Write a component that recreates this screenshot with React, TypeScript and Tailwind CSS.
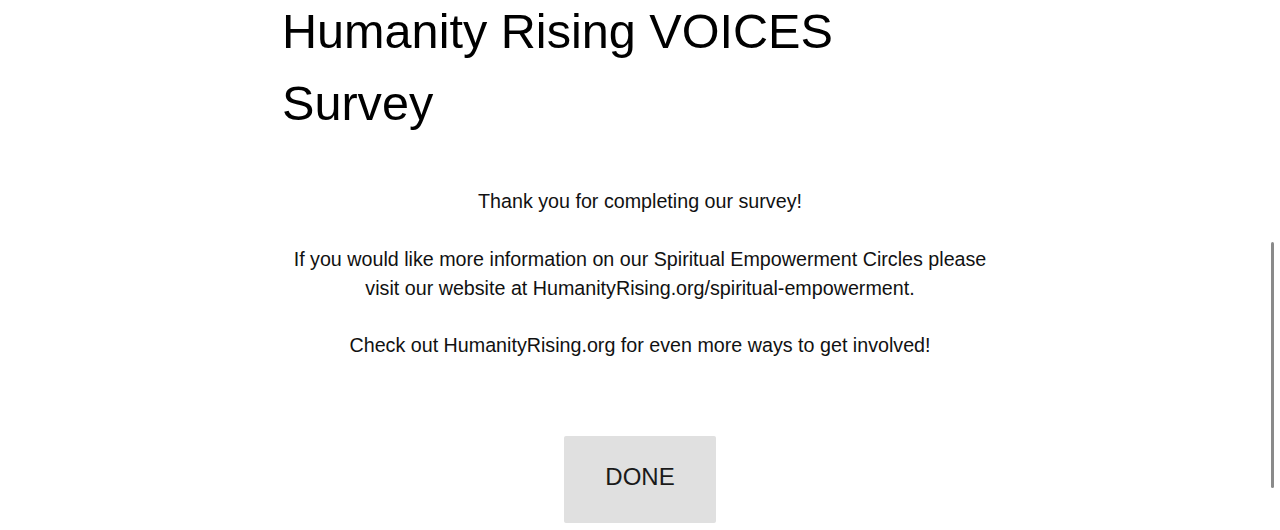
import React from 'react';

const App: React.FC = () => {
  return (
    <div className="relative h-[530px] w-full overflow-hidden bg-white font-['Liberation_Sans',Arial,sans-serif] text-black">
      <div className="mx-auto w-[720px] -mt-[5px]">
        <h1 className="w-[620px] pl-[2px] text-[48.6px] leading-[72px] font-normal">Humanity Rising VOICES Survey</h1>

        <div className="mt-[48px] text-center text-[19.7px] leading-[29px] text-[#111]">
          <p className="mb-[29px]">Thank you for completing our survey!</p>
          <p className="mb-[28px]">
            If you would like more information on our Spiritual Empowerment Circles please visit our website at
            HumanityRising.org/spiritual-empowerment.
          </p>
          <p>Check out HumanityRising.org for even more ways to get involved!</p>
        </div>

        <div className="mt-[76px] flex justify-center">
          <button className="h-[87px] w-[152px] rounded-[2px] bg-[#e0e0e0] pb-[5px] text-[24px] text-[#1a1a1a]">
            DONE
          </button>
        </div>
      </div>

      {/* overlay scrollbar thumb */}
      <div className="absolute left-[1271px] top-[242px] h-[246px] w-[3px] rounded-full bg-[#8a8a8a]" />
    </div>
  );
};

export default App;
